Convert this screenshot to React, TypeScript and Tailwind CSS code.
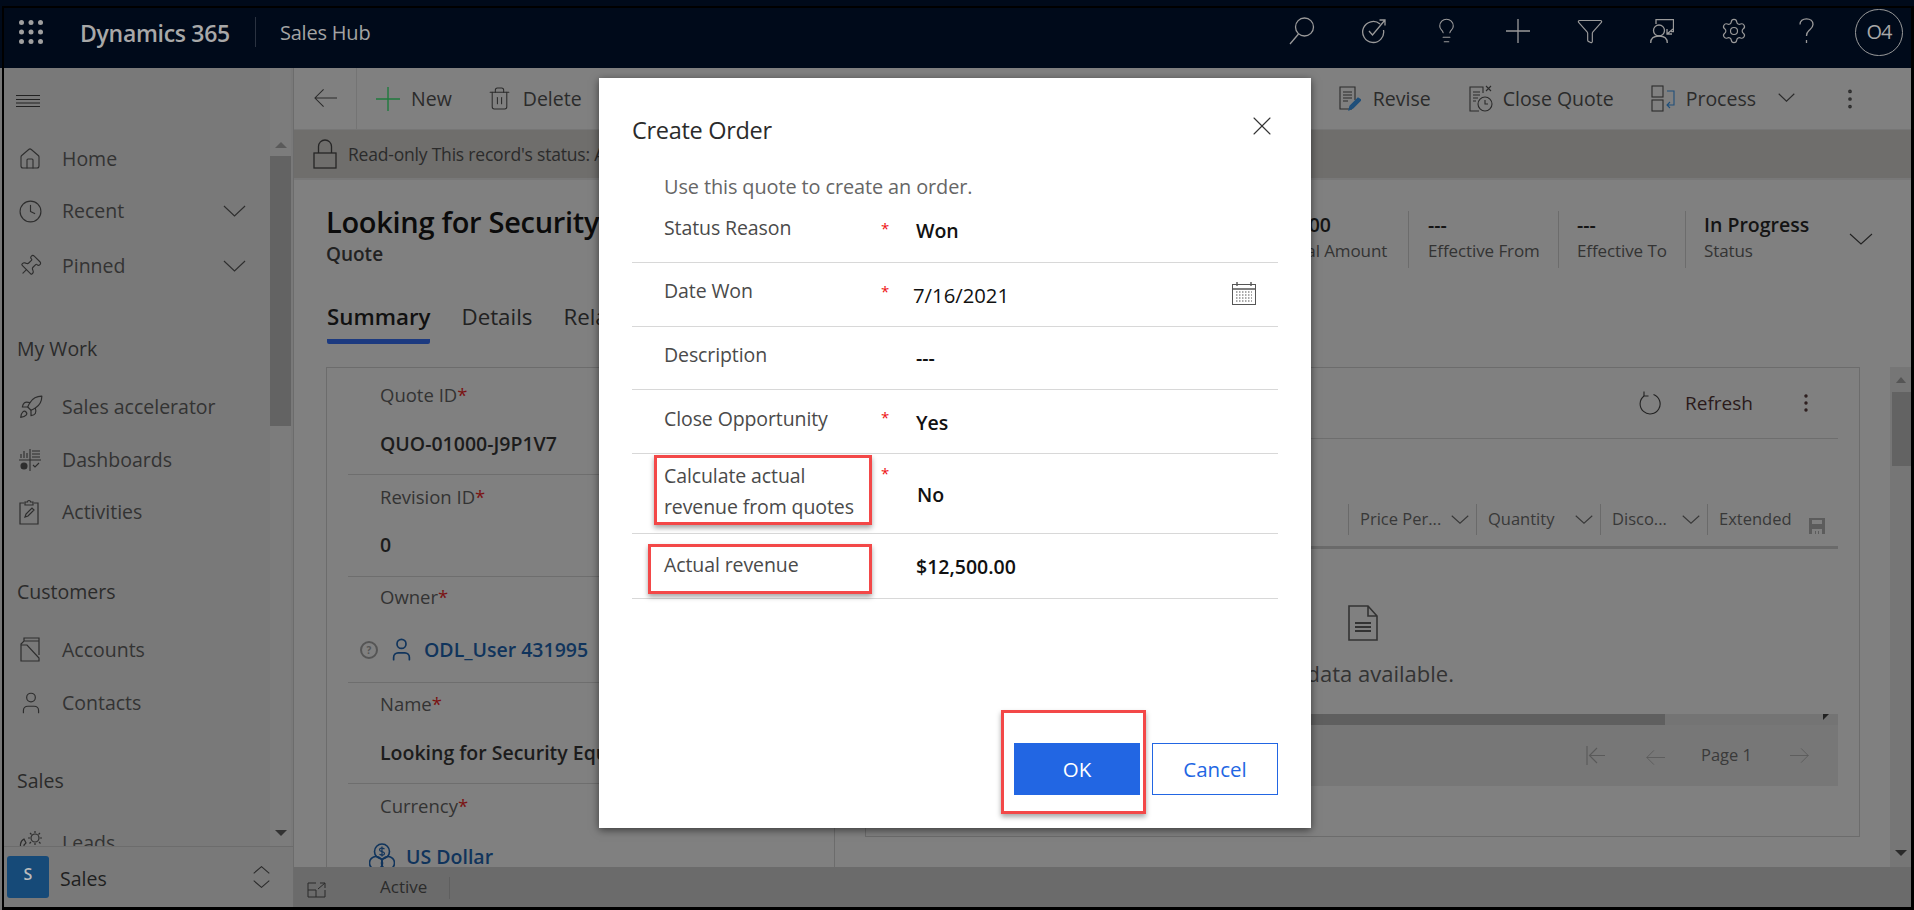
import React from 'react'
import { Clock, Home, Lightbulb, MoreVertical, Pin, Rocket, Settings, Trash2, User, X, Funnel } from 'lucide-react'

const Chevron = ({ w, h, up = false, className = '' }: { w: number; h: number; up?: boolean; className?: string }) => (
	<svg width={w} height={h} viewBox="0 0 24 12" preserveAspectRatio="none" fill="none" stroke="currentColor" strokeWidth="1.100" className={className}>
		<path d={up ? 'M1 11L12 1l11 10' : 'M1 1l11 10L23 1'} vectorEffect="non-scaling-stroke" />
	</svg>
)

const Arrow = ({ w, h, right = false, className = '' }: { w: number; h: number; right?: boolean; className?: string }) => (
	<svg width={w} height={h} viewBox="0 0 24 20" fill="none" stroke="currentColor" strokeWidth="1.100" className={className}>
		<path d={right ? 'M0 10h23M14 1l9 9-9 9' : 'M24 10H1M10 1l-9 9 9 9'} />
	</svg>
)

const Waffle = () => (
	<svg width="24" height="24" viewBox="0 0 24 24" fill="#9f9f9f">
		{[2.500, 12, 21.500].map(y => [2.500, 12, 21.500].map(x => <circle key={`${x}-${y}`} cx={x} cy={y} r="2.500" />))}
	</svg>
)

const SearchIcon = () => (
	<svg width="26" height="28" viewBox="0 0 26 28" fill="none" stroke="#9a9a9a" strokeWidth="1.300">
		<circle cx="15.500" cy="10" r="9" />
		<path d="M9.500 17L1 27" />
	</svg>
)

const TargetIcon = () => (
	<svg width="26" height="26" viewBox="0 0 26 26" fill="none" stroke="#9a9a9a" strokeWidth="1.300">
		<path d="M19 6A10.500 10.500 0 1 0 22.500 12" />
		<path d="M8 13l3.500 4L24 2M18.500 2H24v5.500" />
	</svg>
)

const AssignIcon = () => (
	<svg width="24" height="24" viewBox="0 0 24 24" fill="none" stroke="#9a9a9a" strokeWidth="1.300">
		<path d="M6 5V.7h17.500v12h-2.500" />
		<path d="M17 10v5h5M17 15l6-5" />
		<circle cx="9" cy="11.500" r="5.500" />
		<path d="M.7 24c0-4.500 3-7 8.300-7s8.300 2.500 8.300 7" />
	</svg>
)

const QuestionIcon = () => (
	<svg width="15" height="25" viewBox="0 0 15 25" fill="none" stroke="#9a9a9a" strokeWidth="1.300">
		<path d="M1 6.500C1 3 3.800.8 7.500.8S14 3 14 6.500c0 3-2 4.300-4 6-1.800 1.500-2.500 2.700-2.500 5.500M7.500 22v3" />
	</svg>
)

const DashboardIcon = () => (
	<svg width="24" height="24" viewBox="0 0 24 24" fill="none" stroke="#2e2e2e" strokeWidth="1.100">
		<path d="M1 12h22M12 1v22M3 10V6M6 10V3M9 10V5M14 3h8M14 6h8M14 9h8M15 17l2 2 4-4" />
		<circle cx="6" cy="18" r="3" fill="#2e2e2e" />
	</svg>
)

const ClipboardIcon = () => (
	<svg width="22" height="26" viewBox="0 0 22 26" fill="none" stroke="#2e2e2e" strokeWidth="1.200">
		<path d="M6 4H2v21h18V4h-4M7 6V3h2.500a1.500 1.500 0 0 1 3 0H15v3z" />
		<path d="M7 18l1-3 6-6 2 2-6 6z" />
	</svg>
)

const AccountsIcon = () => (
	<svg width="24" height="26" viewBox="0 0 24 26" fill="none" stroke="#2e2e2e" strokeWidth="1.200">
		<path d="M3 24V7l3-3h15v14M6 4V1h15v17M3 8h6l12 13v3H3z" />
	</svg>
)

const LeadsIcon = () => (
	<svg width="26" height="26" viewBox="0 0 26 26" fill="none" stroke="#2e2e2e" strokeWidth="1.200">
		<circle cx="17" cy="8" r="4" />
		<path d="M17 1v2M17 13v2M10 8h2M22 8h2M12 3l1.500 1.500M21 12l1.500 1.500M22 3l-1.500 1.500M13 12l-1.500 1.500" />
		<path d="M6 9C2 11 1 17 5 21c3 3 7 4 9 1l-3-3-2 1c-2-1-3-3-3-5l2-2z" />
	</svg>
)

const RevisePenIcon = () => (
	<svg width="22" height="26" viewBox="0 0 22 26" fill="none" stroke="#2b2b2b" strokeWidth="1.100">
		<path d="M13 23H1V1h15v13M4 6h9M4 9h9M4 12h9M4 15h5" />
		<path d="M10 24l1-4 8-8 3 2-8 8z" fill="#1f4f7a" stroke="#1f4f7a" />
	</svg>
)

const CloseQuoteIcon = () => (
	<svg width="24" height="27" viewBox="0 0 24 27" fill="none" stroke="#2b2b2b" strokeWidth="1.100">
		<path d="M10 26H1V2h13v6M4 7h7M4 10h7M4 13h5M4 16h3" />
		<path d="M17 1l5 5M22 1l-5 5" />
		<circle cx="16" cy="19" r="7" />
		<path d="M16 15v4h3" />
	</svg>
)

const ProcessIcon = () => (
	<svg width="25" height="27" viewBox="0 0 25 27" fill="none" stroke="#2b2b2b" strokeWidth="1.100">
		<rect x="1" y="1" width="11" height="11" />
		<rect x="1" y="15" width="11" height="11" />
		<path d="M16 6h7v14h-7M19 17l-3 3 3 3" stroke="#1f4f7a" />
	</svg>
)

const TrashIcon = () => <Trash2 size={25} strokeWidth={1} />

const LockIcon = () => (
	<svg width="24" height="30" viewBox="0 0 24 30" fill="none" stroke="#262626" strokeWidth="1.300">
		<rect x="1" y="14" width="22" height="15" />
		<path d="M5.500 14V7.500a6.500 6.500 0 0 1 13 0V14" />
	</svg>
)

const CalendarIcon = () => (
	<svg width="24" height="23" viewBox="0 0 24 23" fill="none" stroke="#555" strokeWidth="1">
		<rect x="0.500" y="2.500" width="23" height="20" />
		<path d="M0.500 7h23M5 0v4M19 0v4" strokeWidth="1.400" />
		<path d="M4 10h16M4 13h16M4 16h16M4 19h16" strokeDasharray="1.500 1.500" />
	</svg>
)

const DocIcon = () => (
	<svg width="30" height="36" viewBox="0 0 30 36" fill="none" stroke="#333" strokeWidth="1.600">
		<path d="M1 35V1h19l9 10v24zM20 1v10h9" />
		<path d="M7 18h16M7 22h16M7 26h16" strokeWidth="2" />
	</svg>
)

const CurrencyIcon = () => (
	<svg width="26" height="28" viewBox="0 0 26 28" fill="none" stroke="#10345c" strokeWidth="1.600">
		<circle cx="13" cy="8.500" r="7.500" />
		<circle cx="7" cy="20" r="6.500" />
		<circle cx="19" cy="20" r="6.500" />
		<path d="M15.500 6c-2-1.500-5-1-5 .8 0 2.500 5 1.200 5 3.700 0 1.800-3 2.200-5 .8M13 3.500v10" strokeWidth="1.200" />
	</svg>
)

const ExpandIcon = () => (
	<svg width="19" height="16" viewBox="0 0 19 16" fill="none" stroke="#2b2b2b" strokeWidth="1">
		<path d="M9 1H1v14h17V8M1 8h8v7M11 7l7-6M13 1h5v5" />
	</svg>
)

const FirstPageIcon = () => (
	<svg width="19" height="19" viewBox="0 0 19 19" fill="none" stroke="#5a5a5a" strokeWidth="1.100">
		<path d="M1 0v19M19 9.500H4M11 2L3.500 9.500 11 17" />
	</svg>
)

const RefreshIcon = () => (
	<svg width="22" height="24" viewBox="0 0 22 24" fill="none" stroke="#222" strokeWidth="1.100">
		<path d="M14.500 3.500A10 10 0 1 1 5 5" />
		<path d="M5 .5V5h4.500" />
	</svg>
)

const SaveIcon = () => (
	<svg width="16" height="16" viewBox="0 0 16 16" fill="#5c5c5c">
		<path d="M0 0h16v16h-3v-5H3v5H0zM3 2v4h10V2zM6 13h1v3H6zM9 13h1v3H9z" fillRule="evenodd" />
	</svg>
)

const navTop = [
	{ icon: <Home size={24} strokeWidth={1.100} />, label: 'Home', className: 'mt-0', chevron: false },
	{ icon: <Clock size={25} strokeWidth={1.100} />, label: 'Recent', className: 'mt-0', chevron: true },
	{ icon: <Pin size={24} strokeWidth={1.100} className="rotate-45" />, label: 'Pinned', className: 'mt-[3px]', chevron: true },
]

const NavItem = ({ icon, label, chevron, className = '' }: { icon: React.ReactNode; label: string; chevron?: boolean; className?: string }) => (
	<div className={`flex items-center h-[52px] pl-[14px] text-[19.500px] text-[#333] shrink-0 ${className}`}>
		<span className="w-[44px] flex text-[#2e2e2e]">{icon}</span>
		<span>{label}</span>
		{chevron && <Chevron w={23} h={12} className="ml-auto mr-[24px] text-[#2e2e2e]" />}
	</div>
)

const SectionTitle = ({ label, className }: { label: string; className: string }) => (
	<div className={`pl-[13px] text-[19.500px] leading-[26px] font-medium text-[#2b2b2b] shrink-0 ${className}`}>{label}</div>
)

const Sidebar = () => (
	<aside className="w-[290px] shrink-0 h-full bg-[#797979] border-r border-[#6c6c6c] flex flex-col">
		<div className="flex-1 min-h-0 flex overflow-hidden">
			<div className="flex-1 flex flex-col overflow-hidden">
				<div className="h-[65px] shrink-0 pl-[11px] flex items-center text-[#222]">
					<svg width="26" height="12" viewBox="0 0 26 12" stroke="#222" strokeWidth="1"><path d="M1 .5h24M1 4.500h24M1 8h24M1 11.500h24" /></svg>
				</div>
				{navTop.map(item => <NavItem key={item.label} {...item} />)}
				<SectionTitle label="My Work" className="mt-[44px]" />
				<NavItem icon={<Rocket size={26} strokeWidth={1.100} />} label="Sales accelerator" className="mt-[19px]" />
				<NavItem icon={<DashboardIcon />} label="Dashboards" className="mt-[1px]" />
				<NavItem icon={<ClipboardIcon />} label="Activities" />
				<SectionTitle label="Customers" className="mt-[41px]" />
				<NavItem icon={<AccountsIcon />} label="Accounts" className="mt-[19px]" />
				<NavItem icon={<User size={26} strokeWidth={1.100} />} label="Contacts" className="mt-[1px]" />
				<SectionTitle label="Sales" className="mt-[39px]" />
				<NavItem icon={<LeadsIcon />} label="Leads" className="mt-[23px]" />
			</div>
			<div className="w-[21px] mr-[2px] shrink-0 flex flex-col items-center bg-[#7c7c7c]">
				<div className="h-[88px] w-full flex items-end justify-center pb-[8px]">
					<div className="w-0 h-0 border-x-[6px] border-x-transparent border-b-[6px] border-b-[#5a5a5a]" />
				</div>
				<div className="h-[270px] w-full bg-[#636363]" />
				<div className="mt-auto pb-[10px]">
					<div className="w-0 h-0 border-x-[6px] border-x-transparent border-t-[6px] border-t-[#333]" />
				</div>
			</div>
		</div>
		<div className="h-[61px] shrink-0 border-t border-[#6c6c6c] flex items-center pl-[3px]">
			<div className="w-[42px] h-[42px] rounded-[3px] bg-[#164a78] text-[#bbb] text-[16px] font-semibold flex items-center justify-center pb-[6px]">S</div>
			<span className="ml-[11px] mt-[3px] text-[19.500px] font-medium text-[#1f1f1f]">Sales</span>
			<div className="ml-auto mr-[23px] flex flex-col gap-[6px] text-[#2b2b2b]">
				<Chevron w={17} h={8} up />
				<Chevron w={17} h={8} />
			</div>
		</div>
	</aside>
)

const HeaderIcon = ({ children }: { children: React.ReactNode }) => (
	<div className="w-[72px] flex items-center justify-center text-[#9a9a9a]">{children}</div>
)

const Header = () => (
	<header className="h-[60px] shrink-0 bg-[#000a1a] flex items-center pb-[12px] text-[#a3a3a3]">
		<div className="ml-[15px] flex"><Waffle /></div>
		<span className="ml-[37px] mt-[2px] text-[23px] font-semibold tracking-[-0.3px] text-[#a8a8a8] whitespace-nowrap">Dynamics 365</span>
		<div className="ml-[25px] w-px h-[30px] bg-[#2a3240]" />
		<span className="ml-[24px] mt-[2px] text-[20px] tracking-[-0.2px]">Sales Hub</span>
		<div className="ml-auto flex items-center">
			<div className="flex items-center mb-[3px]">
				<HeaderIcon><SearchIcon /></HeaderIcon>
				<HeaderIcon><TargetIcon /></HeaderIcon>
				<HeaderIcon><Lightbulb size={27} strokeWidth={1} /></HeaderIcon>
				<HeaderIcon>
					<svg width="24" height="24" viewBox="0 0 24 24" stroke="#9a9a9a" strokeWidth="1.300"><path d="M12 0v24M0 12h24" /></svg>
				</HeaderIcon>
				<HeaderIcon><Funnel size={28} strokeWidth={1} /></HeaderIcon>
				<HeaderIcon><AssignIcon /></HeaderIcon>
				<HeaderIcon><Settings size={28} strokeWidth={1} /></HeaderIcon>
				<HeaderIcon><QuestionIcon /></HeaderIcon>
			</div>
			<div className="ml-[13px] mr-[8px] w-[48px] h-[47px] rounded-full border border-[#9a9a9a] flex items-center justify-center text-[20px] tracking-[-1px] text-[#a8a8a8]">O4</div>
		</div>
	</header>
)

const CommandBar = () => (
	<div className="h-[62px] shrink-0 bg-[#808080] border-b border-[#767676] flex items-center text-[19.500px] text-[#2b2b2b]">
		<div className="w-[63px] h-full border-r border-[#747474] flex items-center justify-center">
			<Arrow w={23} h={20} className="-mt-[2px]" />
		</div>
		<svg width="24" height="24" viewBox="0 0 24 24" stroke="#1f7a3d" strokeWidth="1.400" className="ml-[19px]"><path d="M12 0v24M0 12h24" /></svg>
		<span className="ml-[11px]">New</span>
		<span className="ml-[35px] flex"><TrashIcon /></span>
		<span className="ml-[11px]">Delete</span>
		<div className="ml-auto flex items-center">
			<RevisePenIcon />
			<span className="ml-[12px]">Revise</span>
			<span className="ml-[38px] flex"><CloseQuoteIcon /></span>
			<span className="ml-[10px]">Close Quote</span>
			<span className="ml-[37px] flex"><ProcessIcon /></span>
			<span className="ml-[10px]">Process</span>
			<Chevron w={17} h={9} className="ml-[22px] -mt-[2px]" />
			<MoreVertical size={26} strokeWidth={1.400} className="ml-[42px] mr-[48px]" />
		</div>
	</div>
)

const NoticeBar = () => (
	<div className="h-[50px] shrink-0 bg-[#6f6e6c] border-b-2 border-[#787878] flex items-center text-[17.500px] text-[#2b2b2b]">
		<span className="ml-[19px] flex"><LockIcon /></span>
		<span className="ml-[11px] tracking-[-0.2px] whitespace-nowrap">Read-only This record's status: Active</span>
	</div>
)

const kpis = [
	{ value: '$0.00', label: 'Total Amount', className: 'w-[127px] pl-0' },
	{ value: '---', label: 'Effective From', className: 'w-[150px] pl-[19px] border-l border-[#6c6c6c]' },
	{ value: '---', label: 'Effective To', className: 'w-[127px] pl-[18px] border-l border-[#6c6c6c]' },
	{ value: 'In Progress', label: 'Status', className: 'w-[164px] pl-[18px] border-l border-[#6c6c6c]' },
]

const TitleRow = () => (
	<div className="h-[110px] shrink-0 flex pl-[32px] pr-[38px]">
		<div className="pt-[23px]">
			<div className="text-[29px] leading-[38px] font-semibold tracking-[-0.3px] text-[#0b0b0b] whitespace-nowrap">Looking for Security Equipment</div>
			<div className="text-[19px] leading-[26px] font-semibold text-[#222]">Quote</div>
		</div>
		<div className="ml-auto flex items-start pt-[31px]">
			{kpis.map(kpi => (
				<div key={kpi.label} className={`h-[57px] ${kpi.className}`}>
					<div className="text-[19.500px] leading-[28px] font-semibold text-[#141414] whitespace-nowrap">{kpi.value}</div>
					<div className="text-[17px] leading-[24px] tracking-[-0.1px] text-[#333] whitespace-nowrap">{kpi.label}</div>
				</div>
			))}
			<Chevron w={24} h={12} className="mt-[22px] text-[#222]" />
		</div>
	</div>
)

const Tabs = () => (
	<div className="h-[77px] shrink-0 flex pl-[33px] text-[22.300px] text-[#222]">
		{[
			{ label: 'Summary', active: true },
			{ label: 'Details', active: false },
			{ label: 'Related', active: false },
		].map(tab => (
			<div key={tab.label} className={`mr-[31px] h-[54px] pt-[13px] leading-[28px] ${tab.active ? 'font-semibold text-[#111] border-b-[5px] border-[#1c3a80] rounded-b-[2px]' : ''}`}>
				{tab.label}
			</div>
		))}
	</div>
)

const fields = [
	{ label: 'Quote ID', value: <span className="font-semibold">QUO-01000-J9P1V7</span>, className: 'h-[107px] border-b border-[#6e6e6e]', labelClass: 'pt-[14px]', valueClass: 'mt-[23px]' },
	{ label: 'Revision ID', value: <span className="font-semibold">0</span>, className: 'h-[102px] border-b border-[#6e6e6e]', labelClass: 'pt-[9px]', valueClass: 'mt-[22px]' },
	{
		label: 'Owner',
		value: (
			<span className="-ml-[20px] flex items-center gap-[10px] font-semibold text-[#10345c]">
				<span className="w-[18px] h-[18px] rounded-full border-2 border-[#555] text-[10px] font-bold leading-none text-[#555] flex items-center justify-center">?</span>
				<User size={27} strokeWidth={1.500} />
				<span className="-ml-[1px]">ODL_User 431995</span>
			</span>
		),
		className: 'h-[106px] border-b border-[#6e6e6e]',
		labelClass: 'pt-[7px]',
		valueClass: 'mt-[26px]',
	},
	{ label: 'Name', value: <span className="font-semibold whitespace-nowrap">Looking for Security Equipment</span>, className: 'h-[101px] border-b border-[#6e6e6e]', labelClass: 'pt-[8px]', valueClass: 'mt-[23px]' },
	{
		label: 'Currency',
		value: (
			<span className="-ml-[11px] flex items-center gap-[11px] font-semibold text-[#10345c]">
				<CurrencyIcon />
				US Dollar
			</span>
		),
		className: 'h-[84px]',
		labelClass: 'pt-[9px]',
		valueClass: 'mt-[24px]',
	},
]

const FormCard = () => (
	<div className="w-[509px] shrink-0 h-full border-l border-t border-r border-[#6c6c6c] flex flex-col overflow-hidden">
		{fields.map(field => (
			<div key={field.label} className={`ml-[21px] pl-[32px] shrink-0 ${field.className}`}>
				<div className={`text-[18.500px] leading-[26px] text-[#333] ${field.labelClass}`}>
					{field.label}<span className="text-[#7a1212]">*</span>
				</div>
				<div className={`text-[19.500px] leading-[26px] text-[#1c1c1c] flex ${field.valueClass}`}>{field.value}</div>
			</div>
		))}
	</div>
)

const gridColumns = [
	{ label: 'Price Per...', className: 'w-[128px]' },
	{ label: 'Quantity', className: 'w-[124px]' },
	{ label: 'Disco...', className: 'w-[107px]' },
]

const SubGrid = () => (
	<div className="flex-1 h-[470px] border border-[#6c6c6c] flex flex-col pr-[21px] mr-[30px]">
		<div className="h-[71px] shrink-0 border-b border-[#6e6e6e] flex items-center text-[19px] text-[#2a1a1a]">
			<span className="ml-auto flex"><RefreshIcon /></span>
			<span className="ml-[24px]">Refresh</span>
			<MoreVertical size={24} strokeWidth={1.400} className="ml-[41px] mr-[20px]" />
		</div>
		<div className="h-[110px] shrink-0 flex items-end justify-end border-b-[3px] border-[#6a6a6a] pb-[11px] text-[16.500px] text-[#383838]">
			{gridColumns.map(col => (
				<div key={col.label} className={`h-[31px] border-l border-[#6a6a6a] pl-[11px] pr-[7px] flex items-center justify-between ${col.className}`}>
					<span className="whitespace-nowrap">{col.label}</span>
					<Chevron w={18} h={9} />
				</div>
			))}
			<div className="w-[131px] h-[31px] border-l border-[#6a6a6a] pl-[11px] flex items-center">
				<span>Extended</span>
				<span className="ml-auto mr-[13px] mt-[13px] flex"><SaveIcon /></span>
			</div>
		</div>
		<div className="h-[165px] shrink-0 flex flex-col items-center pt-[56px] ml-[21px]">
			<DocIcon />
			<div className="mt-[18px] text-[22px] leading-[28px] text-[#333] whitespace-nowrap">No data available.</div>
		</div>
		<div className="h-[11px] shrink-0 bg-[#747474] flex relative">
			<div className="w-[799px] bg-[#5f5f5f]" />
			<div className="absolute right-[9px] top-0 w-0 h-0 border-t-[6px] border-t-[#222] border-r-[6px] border-r-transparent" />
		</div>
		<div className="h-[61px] shrink-0 bg-[#777] flex items-center text-[16.500px] text-[#3a3a3a]">
			<div className="ml-auto flex items-center">
				<FirstPageIcon />
				<Arrow w={19} h={17} className="ml-[41px] mt-[3px] text-[#5a5a5a]" />
				<span className="ml-[36px]">Page 1</span>
				<Arrow w={19} h={17} right className="ml-[38px] mr-[29px] text-[#5a5a5a]" />
			</div>
		</div>
	</div>
)

const PageScrollbar = () => (
	<div className="w-[21px] shrink-0 h-[500px] bg-[#767676] flex flex-col items-center">
		<div className="h-[25px] w-full flex items-center justify-center">
			<div className="w-0 h-0 border-x-[5px] border-x-transparent border-b-[6px] border-b-[#555]" />
		</div>
		<div className="h-[74px] w-[19px] ml-[2px] bg-[#636363]" />
		<div className="mt-auto pb-[11px]">
			<div className="w-0 h-0 border-x-[6px] border-x-transparent border-t-[6px] border-t-[#2a2a2a]" />
		</div>
	</div>
)

const Footer = () => (
	<div className="h-[40px] shrink-0 bg-[#6b6b6b] flex items-center text-[17px] text-[#2b2b2b]">
		<span className="ml-[13px] mt-[6px] flex"><ExpandIcon /></span>
		<span className="ml-[54px]">Active</span>
		<div className="ml-[22px] w-px h-[22px] bg-[#5f5f5f] mt-[2px]" />
	</div>
)

const rows = [
	{ label: 'Status Reason', star: true, value: 'Won', h: 'h-[66px]', lp: 'pt-[15px]', sp: 'pt-[25px]', vp: 'pt-[22px]', vc: 'pl-[4px] font-semibold text-[19.500px]' },
	{ label: 'Date Won', star: true, value: '7/16/2021', h: 'h-[64px]', lp: 'pt-[12px]', sp: 'pt-[22px]', vp: 'pt-[20px]', vc: 'pl-[1px] text-[20.300px]', calendar: true },
	{ label: 'Description', star: false, value: '---', h: 'h-[63px]', lp: 'pt-[12px]', sp: 'pt-[17px]', vp: 'pt-[19px]', vc: 'pl-[4px] font-semibold text-[19.500px]' },
	{ label: 'Close Opportunity', star: true, value: 'Yes', h: 'h-[64px]', lp: 'pt-[13px]', sp: 'pt-[21px]', vp: 'pt-[21px]', vc: 'pl-[4px] font-semibold text-[19.500px]' },
	{ label: 'Calculate actual revenue from quotes', star: true, value: 'No', h: 'h-[80px]', lp: 'pt-[6px]', sp: 'pt-[13px]', vp: 'pt-[29px]', vc: 'pl-[5px] font-semibold text-[19.500px]' },
	{ label: 'Actual revenue', star: false, value: '$12,500.00', h: 'h-[65px]', lp: 'pt-[15px]', sp: 'pt-[17px]', vp: 'pt-[21px]', vc: 'pl-[4px] font-semibold text-[19.500px]' },
]

const Dialog = () => (
	<div className="absolute left-[599px] top-[78px] w-[712px] h-[750px] bg-white shadow-[0_2px_8px_rgba(0,0,0,0.55)] px-[33px] flex flex-col">
		<div className="h-[83px] shrink-0 flex items-start justify-between">
			<span className="mt-[34px] text-[23.500px] leading-[36px] tracking-[-0.3px] text-[#2b2b2b]">Create Order</span>
			<X size={32} strokeWidth={0.800} className="mt-[32px] text-[#333]" />
		</div>
		<div className="h-[36px] shrink-0 pl-[32px] pt-[13px] text-[19.900px] leading-[26px] tracking-[-0.1px] text-[#666] whitespace-nowrap">Use this quote to create an order.</div>
		{rows.map(row => (
			<div key={row.label} className={`flex shrink-0 border-b border-[#d8d8d8] ${row.h}`}>
				<div className={`w-[248px] pl-[32px] pr-[6px] text-[19.500px] leading-[31px] tracking-[-0.1px] text-[#4a4a4a] ${row.lp}`}>{row.label}</div>
				<div className={`w-[32px] pl-[1px] text-[#e11] text-[15px] leading-[12px] ${row.sp}`}>{row.star ? '*' : ''}</div>
				<div className={`flex-1 leading-[24px] text-[#111] ${row.vp} ${row.vc}`}>{row.value}</div>
				{row.calendar && <div className="pr-[22px] pt-[19px]"><CalendarIcon /></div>}
			</div>
		))}
		<div className="mt-auto pb-[33px] flex justify-end gap-[12px] text-[20.500px]">
			<button className="w-[126px] h-[52px] bg-[#2266e3] text-white">OK</button>
			<button className="w-[126px] h-[52px] bg-white border border-[#2266e3] text-[#2266e3]">Cancel</button>
		</div>
	</div>
)

// the red boxes are annotations drawn over the screenshot
const Callout = ({ className }: { className: string }) => (
	<div className={`absolute border-[3px] border-[#f34848] shadow-[0_3px_5px_rgba(0,0,0,0.35)] ${className}`} />
)

export default function App() {
	return (
		<div className="relative w-[1914px] h-[910px] overflow-hidden bg-[linear-gradient(#000a1a_68px,#777_68px)] font-['Open_Sans','Noto_Sans',sans-serif]">
			<div className="mt-[6px] ml-[2px] h-[904px] border-t-2 border-l-2 border-r-[3px] border-b-[3px] border-black flex flex-col">
				<Header />
				<div className="flex-1 min-h-0 flex">
					<Sidebar />
					<main className="flex-1 min-w-0 flex flex-col bg-[#808080]">
						<CommandBar />
						<NoticeBar />
						<div className="flex-1 min-h-0 flex flex-col overflow-hidden">
							<TitleRow />
							<Tabs />
							<div className="flex-1 min-h-0 flex pl-[32px]">
								<FormCard />
								<div className="flex-1 min-w-0 flex pl-[30px]">
									<SubGrid />
									<PageScrollbar />
								</div>
							</div>
						</div>
						<Footer />
					</main>
				</div>
			</div>
			<Dialog />
			<Callout className="left-[654px] top-[455px] w-[218px] h-[70px]" />
			<Callout className="left-[648px] top-[544px] w-[224px] h-[50px]" />
			<Callout className="left-[1001px] top-[710px] w-[145px] h-[104px]" />
		</div>
	)
}
